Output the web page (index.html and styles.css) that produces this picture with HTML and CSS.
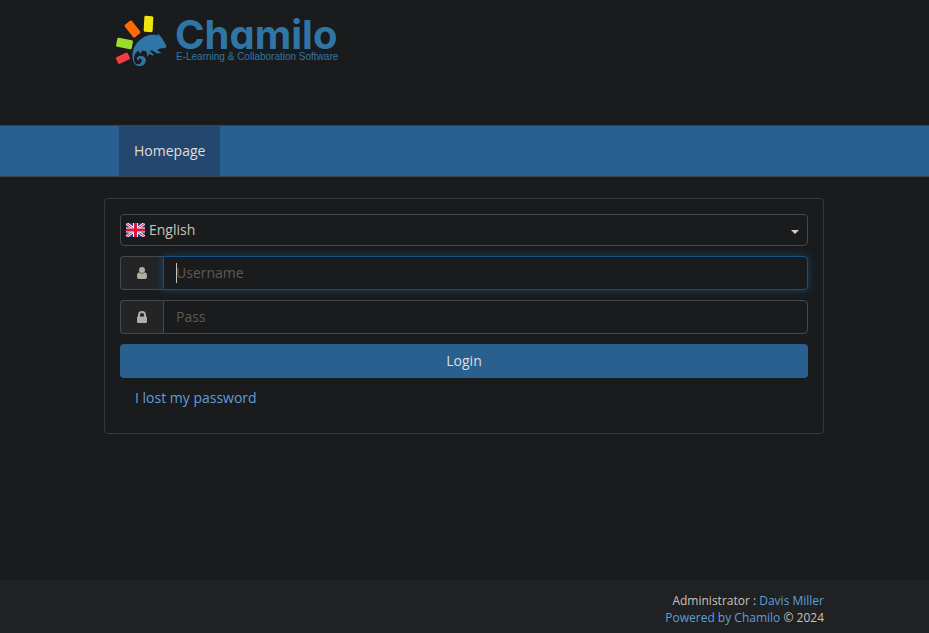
FILE: index.html
```html
<!DOCTYPE html>
<html lang="en">
<head>
<meta charset="utf-8">
<meta name="viewport" content="width=device-width, initial-scale=1">
<title>Chamilo</title>
<link rel="stylesheet" href="styles.css">
</head>
<body>
<header class="header">
  <div class="container">
    <a class="logo" href="#">
      <svg class="logo-mark" viewBox="0 0 56 56" aria-hidden="true">
        <rect x="-4.500" y="-8" width="9" height="16" rx="1.500" fill="#f1e30f" transform="translate(34.500 10) rotate(3)"/>
        <rect x="-4.500" y="-8" width="9" height="16" rx="1.500" fill="#ff6a05" transform="translate(18.500 15) rotate(-38)"/>
        <rect x="-4.500" y="-8" width="9" height="16" rx="1.500" fill="#9bdc2b" transform="translate(10.500 29.500) rotate(-79)"/>
        <rect x="-3.500" y="-6.500" width="7.500" height="13" rx="1.500" fill="#f23d44" transform="translate(9 44.500) rotate(-115)"/>
        <path fill="#2f76a6" d="M18.500 43C18 34 23 26.500 31 22.500C37 19.800 42 21 44 21.500L43.500 19L48 24L52.500 32L51.500 34L46 34.500L43 36L47.500 39L43 39.500L38.500 36.500L35.500 36.500L40 41L39 41.500L35 40L33.500 43L32.500 37.500L28 36.500L26.500 40L24.500 36.500C22 38 20 41 20 45C20 49.500 23 51 25.500 50C28.500 48.500 28.500 44.500 25.500 44.500C24.500 44.500 24.500 45.500 25 46.500C22.500 47 21.500 42.500 26 42C32 41.500 33.500 47 30 50.500C26 54 19 52.500 18.500 43Z"/>
      </svg>
      <span class="logo-words">
        <span class="logo-name">Chamilo</span>
        <span class="logo-tagline">E-Learning &amp; Collaboration Software</span>
      </span>
    </a>
  </div>
</header>
<nav class="navbar">
  <div class="container">
    <a class="nav-link" href="#">Homepage</a>
  </div>
</nav>
<main class="container main">
  <form class="panel">
    <div class="language">
      <svg class="flag" viewBox="0 0 19 14" aria-hidden="true">
        <path fill="#24387e" d="M0 0h19v14H0z"/>
        <path stroke="#eee" stroke-width="3" d="M0 0l19 14M19 0L0 14"/>
        <path stroke="#d8163e" stroke-width="1" d="M0 0l19 14M19 0L0 14"/>
        <path stroke="#eee" stroke-width="5" d="M9.500 0v14M0 7h19"/>
        <path stroke="#d8163e" stroke-width="3" d="M9.500 0v14M0 7h19"/>
      </svg>
      <select class="language-select" aria-label="Language"><option>English</option></select>
    </div>
    <div class="input-group input-group-active">
      <label class="addon" for="username" aria-label="Username">
        <svg class="icon" viewBox="0 0 14 14" aria-hidden="true"><circle cx="7" cy="4" r="3"/><path d="M4 6.200Q7 9 10 6.200Q12 6.500 12 10.500Q12 13 10.200 13H3.800Q2 13 2 10.500Q2 6.500 4 6.200Z"/></svg>
      </label>
      <input class="field" id="username" type="text" placeholder="Username" autofocus>
    </div>
    <div class="input-group">
      <label class="addon" for="password" aria-label="Password">
        <svg class="icon" viewBox="0 0 14 14" aria-hidden="true"><path fill-rule="evenodd" d="M3 6.500V5a4 4 0 0 1 8 0v1.500q1 0 1 1V12q0 1-1 1H3q-1 0-1-1V7.500q0-1 1-1ZM5 6.500h4V5a2 2 0 0 0-4 0Z"/></svg>
      </label>
      <input class="field" id="password" type="password" placeholder="Pass">
    </div>
    <button class="login" type="submit">Login</button>
    <a class="lost" href="#">I lost my password</a>
  </form>
</main>
<footer class="footer">
  <div class="container">
    <div>Administrator : <a href="#">Davis Miller</a></div>
    <div><a href="#">Powered by Chamilo</a> © 2024</div>
  </div>
</footer>
</body>
</html>
```
FILE: styles.css
```css
* { box-sizing: border-box; }
body {
  margin: 0;
  min-height: 100vh;
  display: flex;
  flex-direction: column;
  background: #1a1b1d;
  color: #c8c3bc;
  font: 14px/20px "Open Sans", sans-serif;
}
a { color: #5e9eda; text-decoration: none; }
.container {
  width: 100%;
  max-width: 751px;
  margin: 0 auto;
  padding: 0 16px 0 15px;
}
.header { min-height: 125px; padding-top: 14px; }
.logo { display: inline-flex; gap: 5px; margin-left: 10px; color: #2f76a6; }
.logo-mark { width: 56px; height: 56px; }
.logo-words { display: flex; flex-direction: column; padding-top: 4px; white-space: nowrap; }
.logo-name {
  font-family: Inter, sans-serif;
  font-size: 40px;
  font-weight: 700;
  line-height: 34px;
  font-feature-settings: "cv11";
}
.logo-tagline {
  padding-left: 1px;
  font-family: "Liberation Sans", sans-serif;
  font-size: 10px;
  line-height: 10px;
}
.navbar {
  background: #2a6090;
  border: solid #3e4446;
  border-width: 1px 0;
}
.nav-link {
  display: inline-block;
  margin-left: 15px;
  padding: 15px;
  background: #24476f;
  color: #e0ddd9;
  vertical-align: top;
}
.main { flex: 1; padding-top: 21px; padding-bottom: 21px; }
.panel {
  display: flex;
  flex-direction: column;
  gap: 10px;
  padding: 15px 15px 25px;
  border: 1px solid #35393b;
  border-radius: 4px;
}
.language { position: relative; display: flex; }
.language::after {
  content: "";
  position: absolute;
  right: 9px;
  top: 16px;
  border: 4px solid transparent;
  border-top-color: #d1cdc7;
  border-bottom: 0;
}
.flag { position: absolute; left: 6px; top: 9px; width: 19px; height: 14px; }
.language-select {
  width: 100%;
  height: 32px;
  padding: 0 28px;
  appearance: none;
  border: 1px solid #45494c;
  border-radius: 4px;
  background: transparent;
  color: #c8c3bc;
  font: inherit;
}
.input-group { position: relative; display: flex; height: 34px; }
.input-group-active:has(.field:placeholder-shown:focus)::after {
  content: "";
  position: absolute;
  left: 56px;
  top: 7px;
  width: 1px;
  height: 20px;
  background: #c8c3bc;
}
.addon {
  display: flex;
  align-items: center;
  justify-content: center;
  width: 43px;
  border: 1px solid #45494c;
  border-right: 0;
  border-radius: 4px 0 0 4px;
  background: #222426;
}
.icon { width: 14px; height: 14px; fill: #b2aca2; }
.field {
  flex: 1;
  min-width: 0;
  padding: 6px 12px;
  border: 1px solid #45494c;
  border-radius: 0 4px 4px 0;
  background: #1a1b1d;
  color: #c8c3bc;
  font: inherit;
  outline: 0;
}
.field::placeholder { color: #5e5a54; opacity: 1; }
.field:focus {
  border-color: #11528a;
  box-shadow: 0 0 8px rgba(20, 95, 150, .6);
}
.login {
  height: 34px;
  border: 0;
  border-radius: 4px;
  background: #2a6090;
  color: #e0ddd9;
  font: inherit;
}
.lost { align-self: flex-start; margin-left: 15px; }
.footer {
  padding: 12px 0 7px;
  background: #202123;
  font-size: 12px;
  line-height: 17px;
  text-align: right;
}
```
